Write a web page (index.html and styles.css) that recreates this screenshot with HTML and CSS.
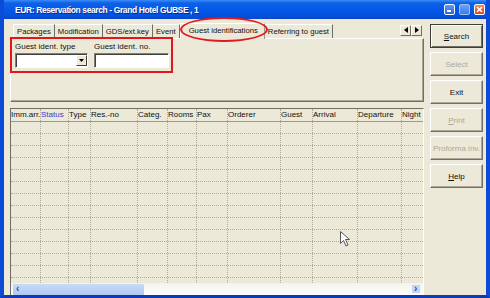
FILE: index.html
```html
<!DOCTYPE html>
<html lang="en">
<head>
    <meta charset="UTF-8">
    <title>EUR: Reservation search</title>
    <link rel="stylesheet" href="styles.css">
</head>
<body>
    <div class="window">
        <div class="titlebar">
            <span class="title">EUR: Reservation search - Grand Hotel GUBSE , 1</span>
            <div class="caption-btns">
                <span class="cap cap-min"><span class="min-bar"></span></span>
                <span class="cap cap-max"></span>
                <span class="cap cap-close">
                    <svg width="7" height="7" viewBox="0 0 7 7"><path d="M1 1L6 6M6 1L1 6" stroke="#fff" stroke-width="1.6"/></svg>
                </span>
            </div>
        </div>

        <div class="client">
            <div class="main">
                <div class="tabs">
                    <span class="tab">Packages</span>
                    <span class="tab">Modification</span>
                    <span class="tab">GDS/ext.key</span>
                    <span class="tab">Event</span>
                    <span class="tab active">Guest identifications</span>
                    <span class="tab">Referring to guest</span>
                    <div class="tab-scroll">
                        <span class="arrow-btn"><svg width="4" height="6" viewBox="0 0 4 6"><path d="M4 0L0 3L4 6Z" fill="#000"/></svg></span>
                        <span class="arrow-btn"><svg width="4" height="6" viewBox="0 0 4 6"><path d="M0 0L4 3L0 6Z" fill="#000"/></svg></span>
                    </div>
                </div>

                <div class="panel">
                    <div class="fields">
                        <div class="field">
                            <label>Guest ident. type</label>
                            <div class="combo">
                                <span class="drop"><svg width="5" height="3" viewBox="0 0 5 3"><path d="M0 0H5L2.5 3Z" fill="#000"/></svg></span>
                            </div>
                        </div>
                        <div class="field">
                            <label>Guest ident. no.</label>
                            <div class="edit"></div>
                        </div>
                    </div>
                </div>

                <div class="grid">
                    <div class="rows" id="rows">
                        <div class="row head">
                            <span>Imm.arr.</span>
                            <span class="sorted">Status</span>
                            <span>Type</span>
                            <span>Res.-no</span>
                            <span>Categ.</span>
                            <span>Rooms</span>
                            <span>Pax</span>
                            <span>Orderer</span>
                            <span>Guest</span>
                            <span>Arrival</span>
                            <span>Departure</span>
                            <span>Night</span>
                        </div>
                    </div>
                    <div class="hscroll">
                        <div class="thumb"><span class="lt">&lsaquo;</span></div>
                        <span class="rt">&rsaquo;</span>
                    </div>
                </div>
            </div>

            <div class="buttons">
                <button class="btn default"><u>S</u>earch</button>
                <button class="btn" disabled>Select</button>
                <button class="btn">Exit</button>
                <button class="btn" disabled><u>P</u>rint</button>
                <button class="btn" disabled>Proforma inv.</button>
                <button class="btn"><u>H</u>elp</button>
            </div>
        </div>

        <div class="mark-ellipse"></div>
        <svg class="pointer" width="11" height="16" viewBox="0 0 11 16">
            <path d="M0.5 0.5V12.5L3.5 9.5L6 15L8 14L5.5 8.5H9.5Z" fill="#fff" stroke="#555" stroke-width="1"/>
        </svg>
    </div>

    <script>
        // empty grid rows
        const rows = document.getElementById('rows');
        for (let i = 0; i < 16; i++) {
            const row = document.createElement('div');
            row.className = 'row';
            for (let c = 0; c < 12; c++) {
                row.appendChild(document.createElement('span'));
            }
            rows.appendChild(row);
        }
    </script>
</body>
</html>
```

FILE: styles.css
```css
body {
    margin: 0;
    font-family: "Liberation Sans", Arial, sans-serif;
    font-size: 8px;
    color: #111;
}
.window {
    position: relative;
    width: 490px;
    height: 298px;
    box-sizing: border-box;
    background: #ece9d8;
    border-left: 4px solid #0b4bd6;
    border-right: 4px solid #0b4bd6;
    border-bottom: 3px solid #0a3bb8;
    display: flex;
    flex-direction: column;
    overflow: hidden;
}
.titlebar {
    height: 19px;
    margin: 0 -4px;
    padding: 0 4px 0 15px;
    display: flex;
    align-items: center;
    background: linear-gradient(#3a8cf8 0, #0f61e8 3px, #0458e6 10px, #0350de 16px, #0a46c8 19px);
}
.title {
    flex: 1;
    color: #fff;
    font-weight: bold;
    font-size: 8.5px;
    letter-spacing: -0.4px;
    text-shadow: 1px 1px 0 #0a2a8a;
}
.caption-btns {
    display: flex;
    gap: 4px;
    margin-right: 1px;
}
.cap {
    width: 11px;
    height: 11px;
    box-sizing: border-box;
    border: 1px solid #fff;
    border-radius: 2px;
    display: flex;
    align-items: center;
    justify-content: center;
}
.cap-min {
    background: linear-gradient(#5d9bf9, #2663e0);
    align-items: flex-end;
}
.min-bar {
    width: 4px;
    height: 2px;
    background: #fff;
    margin: 0 2px 2px 0;
}
.cap-max {
    background: linear-gradient(#6aa3f7, #3d7ae6);
    border-color: #9fc0f5;
}
.cap-close {
    background: linear-gradient(#f08a5e, #d8411a);
}

.client {
    flex: 1;
    display: flex;
    gap: 6px;
    padding: 0 3px 0 6px;
    min-height: 0;
}
.main {
    width: 414px;
    display: flex;
    flex-direction: column;
    padding-top: 3px;
}

/* tabs */
.tabs {
    height: 16px;
    display: flex;
    align-items: flex-end;
    padding-left: 3px;
}
.tab {
    height: 14px;
    box-sizing: border-box;
    padding: 2px 3px 0 3px;
    font-size: 7.7px;
    border-top: 1px solid #fff;
    border-right: 1px solid #6f6c60;
    white-space: nowrap;
}
.tab:first-child {
    border-left: 1px solid #fff;
}
.tab.active {
    height: 16px;
    padding: 2px 6px 0 8px;
    border-left: 1px solid #fff;
    border-right: 1px solid #9d9a8c;
    background: #ece9d8;
    margin-bottom: -1px;
    position: relative;
}
.tab-scroll {
    margin-left: auto;
    margin-right: 2px;
    align-self: center;
    display: flex;
}
.arrow-btn {
    width: 11px;
    height: 11px;
    box-sizing: border-box;
    border: 1px solid;
    border-color: #fff #716f64 #716f64 #fff;
    display: flex;
    align-items: center;
    justify-content: center;
}

/* tab panel */
.panel {
    height: 64px;
    box-sizing: border-box;
    border: 1px solid;
    border-color: #fff #716f64 #716f64 #fff;
    box-shadow: inset -1px -1px 0 #aca899;
}
.fields {
    width: 163px;
    height: 36px;
    box-sizing: border-box;
    margin: -2px 0 0 -1px;
    border: 2px solid #e3151d;
    padding: 3px 0 0 3px;
    display: flex;
    gap: 6px;
}
.field label {
    display: block;
    height: 11px;
    line-height: 10px;
}
.combo,
.edit {
    height: 15px;
    box-sizing: border-box;
    background: #fff;
    border: 1px solid;
    border-color: #808080 #fff #fff #808080;
    box-shadow: inset 1px 1px 0 #404040;
}
.combo {
    width: 73px;
    display: flex;
    justify-content: flex-end;
}
.drop {
    width: 11px;
    margin: 1px 0;
    box-sizing: border-box;
    background: #ece9d8;
    border: 1px solid;
    border-color: #fff #404040 #404040 #fff;
    display: flex;
    align-items: center;
    justify-content: center;
}
.edit {
    width: 75px;
}

/* result grid */
.grid {
    flex: 1;
    margin-top: 6px;
    min-height: 0;
    display: flex;
    flex-direction: column;
    border-left: 1px solid #716f64;
    border-top: 1px solid #716f64;
    border-right: 1px solid #fff;
}
.rows {
    flex: 1;
    overflow: hidden;
}
.row {
    display: grid;
    grid-template-columns: 30px 28px 22px 47px 30px 29px 31px 53px 32px 45px 44px 22px;
    height: 11px;
    border-bottom: 1px dotted #aeab9c;
}
.row span {
    border-right: 1px dotted #aeab9c;
    padding-left: 1px;
    white-space: nowrap;
    overflow: hidden;
}
.row span:last-child {
    border-right: none;
}
.row.head {
    height: 12px;
    line-height: 11px;
    border-bottom: 1px solid #9d9a8c;
}
.row.head span {
    padding-left: 0;
    overflow: visible;
}
.sorted {
    color: #3a3ad0;
}
.hscroll {
    height: 12px;
    display: flex;
    align-items: center;
    background: linear-gradient(#f3f2ec, #fefefe);
    padding: 0 2px;
}
.thumb {
    width: 131px;
    height: 11px;
    background: linear-gradient(#c8daf8, #b0c8f2);
    border-radius: 1px;
    display: flex;
    align-items: center;
}
.lt,
.rt {
    font-size: 10px;
    font-weight: bold;
    color: #2c4ea8;
    line-height: 8px;
    padding-left: 3px;
}
.rt {
    margin-left: auto;
    margin-right: 1px;
    width: 8px;
    height: 8px;
    background: #c3d6f7;
    padding: 0 0 0 2px;
    box-sizing: border-box;
}

/* command buttons */
.buttons {
    width: 54px;
    display: flex;
    flex-direction: column;
    gap: 4px;
    padding-top: 5px;
}
.btn {
    height: 24px;
    padding: 0;
    font-family: inherit;
    font-size: 8px;
    color: #111;
    background: #ece9d8;
    border: 1px solid;
    border-color: #fff #716f64 #716f64 #fff;
    box-shadow: inset -1px -1px 0 #aca899;
}
.btn.default {
    border: 1px solid #3d3d3d;
    box-shadow: inset 1px 1px 0 #fff, inset -1px -1px 0 #716f64;
}
.btn:disabled {
    color: #aca899;
}

/* annotations over the screenshot */
.mark-ellipse {
    position: absolute;
    left: 176px;
    top: 17px;
    width: 88px;
    height: 25px;
    box-sizing: border-box;
    border: 2px solid #e01820;
    border-radius: 50%;
}
.pointer {
    position: absolute;
    left: 336px;
    top: 231px;
}
```
